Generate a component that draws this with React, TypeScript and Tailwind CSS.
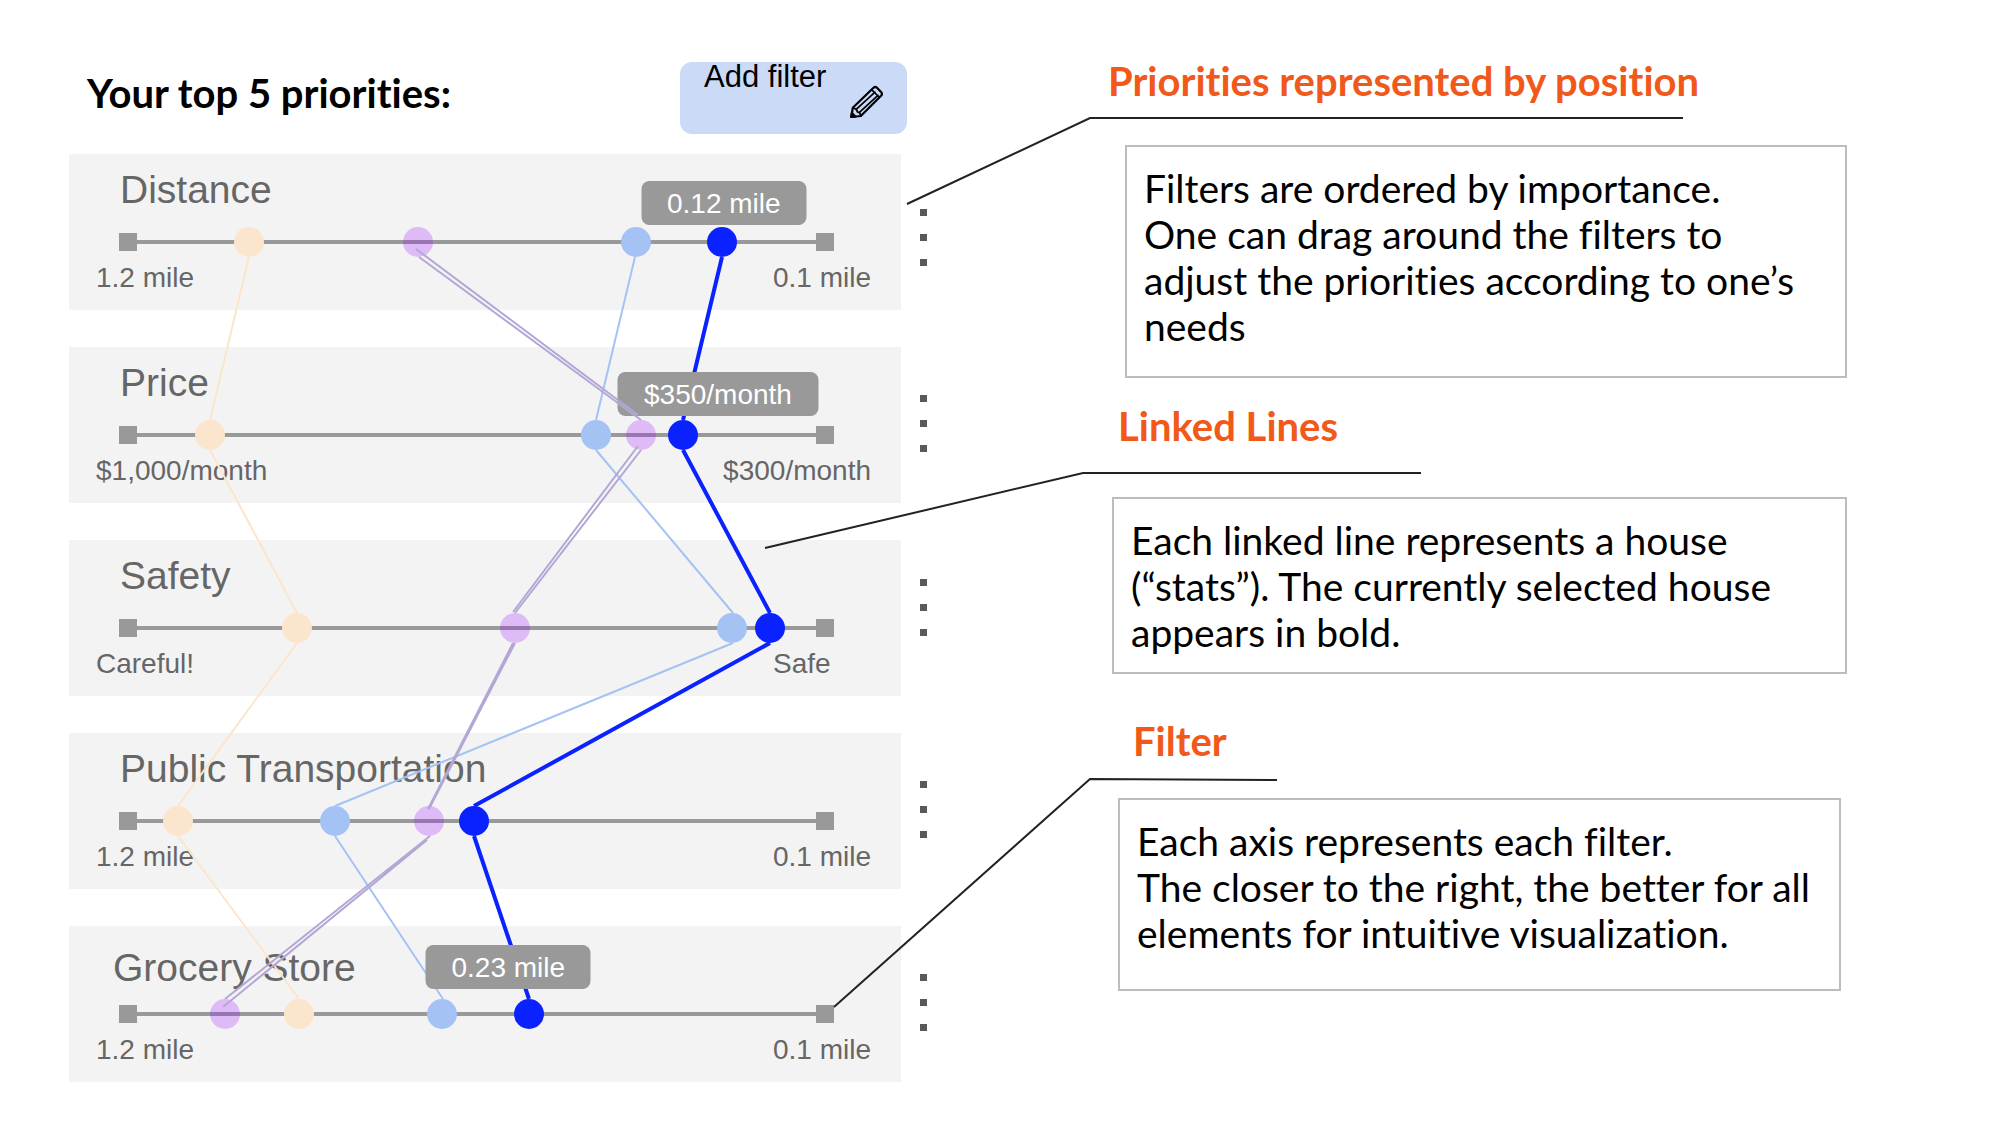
import React from 'react';

type Axis = {
  name: string;
  low: string;
  high: string;
  selected: number;
  peach: number;
  purple: number;
  sky: number;
  tip?: { text: string; place: string };
  heading: string;
  menu: string;
};

/* Positions run along the axis, from 0 to 1000. */
const axes: Axis[] = [
  {
    name: 'Distance', low: '1.2 mile', high: '0.1 mile',
    selected: 858, peach: 182, purple: 418, sky: 722,
    tip: { text: '0.12 mile', place: 'left-[78.7%] top-[27px] w-[165px]' },
    heading: 'pl-[51px] pt-[14px]', menu: 'mt-[55px]',
  },
  {
    name: 'Price', low: '$1,000/month', high: '$300/month',
    selected: 801, peach: 127, purple: 730, sky: 667,
    tip: { text: '$350/month', place: 'left-[78%] top-[25px] w-[201px]' },
    heading: 'pl-[51px] pt-[14px]', menu: 'mt-[48px]',
  },
  {
    name: 'Safety', low: 'Careful!', high: 'Safe',
    selected: 928, peach: 249, purple: 554, sky: 857,
    heading: 'pl-[51px] pt-[14px]', menu: 'mt-[39px]',
  },
  {
    name: 'Public Transportation', low: '1.2 mile', high: '0.1 mile',
    selected: 496, peach: 82, purple: 434, sky: 302,
    heading: 'pl-[51px] pt-[14px]', menu: 'mt-[48px]',
  },
  {
    name: 'Grocery Store', low: '1.2 mile', high: '0.1 mile',
    selected: 577, peach: 252, purple: 148, sky: 452,
    tip: { text: '0.23 mile', place: 'left-[52.8%] top-[19px] w-[165px]' },
    heading: 'pl-[44px] pt-[20px]', menu: 'mt-[48px]',
  },
];

function PencilIcon() {
  return (
    <svg viewBox="0 0 33 33" className="mt-[23px] ml-6 size-[33px] shrink-0" fill="none" stroke="black" strokeWidth="2.2" strokeLinejoin="round" strokeLinecap="round" aria-hidden="true">
      <path d="M1.3 32 2.8 22.8 23.5 2.8Q25.3 1.2 27 2.8L31.3 7.3Q32.6 9 31.3 10.5L10.8 31Z" />
      <path d="M2.8 22.8 6.2 24.3 7.6 27 9.8 28 10.8 31" strokeWidth="1.8" />
      <path d="M6.2 24.3 25 7.2M9.4 27.4 28 10.4M21.8 4.8 29.5 12.5" strokeWidth="1.7" />
      <path d="M1.3 32 1.9 28 5.4 31.5Z" fill="black" />
    </svg>
  );
}

function Dot({ at, color }: { at: number; color: string }) {
  return (
    <span
      className={`absolute top-0 size-[30px] -translate-x-1/2 rounded-full ${color}`}
      style={{ left: `${at / 10}%` }}
    />
  );
}

function FilterRow({ axis }: { axis: Axis }) {
  return (
    <li className="flex items-start gap-[19px]">
      <div className="relative min-w-0 flex-1 bg-[#f3f3f3] pb-4 text-[#666666]">
        <h2 className={`h-[73px] text-[39px] leading-[44px] ${axis.heading}`}>{axis.name}</h2>
        <div className="relative mr-[8%] ml-[6%] flex h-[30px] items-center">
          <span className="size-[18px] bg-[#999999]" />
          <span className="h-1 flex-1 bg-[#999999]" />
          <span className="size-[18px] bg-[#999999]" />
          <Dot at={axis.peach} color="bg-[#fce5cd]" />
          <Dot at={axis.sky} color="bg-[#a4c2f4]" />
          <Dot at={axis.purple} color="bg-[#9900ff]/23" />
          <input
            type="range"
            min={0}
            max={1000}
            defaultValue={axis.selected}
            aria-label={axis.name}
            className="absolute inset-0 h-[30px] w-full cursor-pointer appearance-none bg-transparent [&::-webkit-slider-thumb]:size-[30px] [&::-webkit-slider-thumb]:appearance-none [&::-webkit-slider-thumb]:rounded-full [&::-webkit-slider-thumb]:bg-[#0a22ff]"
          />
        </div>
        <div className="mt-[5px] flex justify-between pr-[30px] pl-[27px] text-[28px] leading-8">
          <span>{axis.low}</span>
          <span className="min-w-[98px]">{axis.high}</span>
        </div>
        {axis.tip && (
          <output
            className={`absolute z-20 h-11 -translate-x-1/2 rounded-lg bg-[#999999] text-center text-[28px] leading-[46px] text-white ${axis.tip.place}`}
          >
            {axis.tip.text}
          </output>
        )}
      </div>
      <button type="button" aria-label={`${axis.name} options`} className={`flex w-[7px] flex-col gap-[18px] ${axis.menu}`}>
        <span className="size-[7px] bg-[#595959]" />
        <span className="size-[7px] bg-[#595959]" />
        <span className="size-[7px] bg-[#595959]" />
      </button>
    </li>
  );
}

function HouseLines() {
  return (
    <li aria-hidden="true" className="pointer-events-none">
      <svg viewBox="0 0 832 928" preserveAspectRatio="none" fill="none" className="absolute inset-y-0 left-0 z-10 h-full w-[calc(100%-26px)]">
        <path stroke="#fce5cd" strokeWidth="2" d="M180 103 141 266M141 296 228 459M228 489 109 652M109 682 230 845" />
        <path stroke="#a4c2f4" strokeWidth="2" d="M566 103 527 266M527 296 664 459M664 489 266 652M266 682 374 845" />
        <path stroke="#0a22ff" strokeWidth="4" d="M653 103 614 266M614 296 701 459M701 489 405 652M405 682 460 845" />
      </svg>
      <svg viewBox="0 0 832 928" preserveAspectRatio="none" fill="none" className="absolute inset-y-0 left-0 z-30 h-full w-[calc(100%-26px)]">
        <path stroke="#b4a7d6" strokeWidth="2" d="M347 95 569 261M350 103 572 266M569 292 444 458M572 296 446 459M446 489 360 655M444 489 359 655M361 682 156 845M358 686 154 853" />
      </svg>
    </li>
  );
}

function Note({ title, children, head, box }: { title: string; children: React.ReactNode; head: string; box: string }) {
  return (
    <section>
      <h2 className={`text-[40px] leading-[46px] font-bold text-[#f0591a] ${head}`}>{title}</h2>
      <p className={`border-2 border-[#bdbdbd] px-[17px] pt-[18px] text-[39px] leading-[46px] ${box}`}>{children}</p>
    </section>
  );
}

export default function App() {
  return (
    <main className="relative grid min-h-screen grid-cols-[69fr_858fr_181fr_739fr_165fr] items-start bg-white font-['Lato',sans-serif] text-black [font-variant-ligatures:none]">
      <section className="col-start-2">
        <header className="flex items-start justify-between pt-[62px] pr-5 pb-5 pl-[18px]">
          <h1 className="mt-2 text-[40px] leading-[46px] font-bold">Your top 5 priorities:</h1>
          <button type="button" className="flex h-[72px] w-[227px] items-start rounded-xl bg-[#cadaf7] pl-6 font-['Liberation_Sans',Arial,sans-serif] text-[31px] leading-[29px]">
            <span className="whitespace-nowrap">Add filter</span>
            <PencilIcon />
          </button>
        </header>
        <ul className="relative font-['Liberation_Sans',Arial,sans-serif]">
          <li>
            <ul className="flex flex-col gap-[37px]">
              {axes.map((axis) => (
                <FilterRow key={axis.name} axis={axis} />
              ))}
            </ul>
          </li>
          <HouseLines />
        </ul>
      </section>

      <div className="col-start-4 pt-[58px]">
        <Note title="Priorities represented by position" head="" box="mt-[41px] ml-[17px] min-h-[233px]">
          Filters are ordered by importance.
          <br />
          One can drag around the filters to adjust the priorities according to one’s needs
        </Note>
        <Note title="Linked Lines" head="mt-[25px] pl-[10px]" box="mt-12 ml-[4px] min-h-[177px]">
          Each linked line represents a house (“stats”). The currently selected house appears in bold.
        </Note>
        <Note title="Filter" head="mt-11 pl-[25px]" box="mt-[34px] mr-[6px] ml-[10px] min-h-[193px]">
          Each axis represents each filter.
          <br />
          The closer to the right, the better for all elements for intuitive visualization.
        </Note>
      </div>

      <svg viewBox="0 0 2012 1130" preserveAspectRatio="none" fill="none" stroke="#222222" strokeWidth="2" className="pointer-events-none absolute top-0 left-0 z-40 h-[1130px] w-full" aria-hidden="true">
        <path d="M907 204 1090 118H1683M765 548 1083 473H1421M834 1007 1090 779 1277 780" />
      </svg>
    </main>
  );
}
